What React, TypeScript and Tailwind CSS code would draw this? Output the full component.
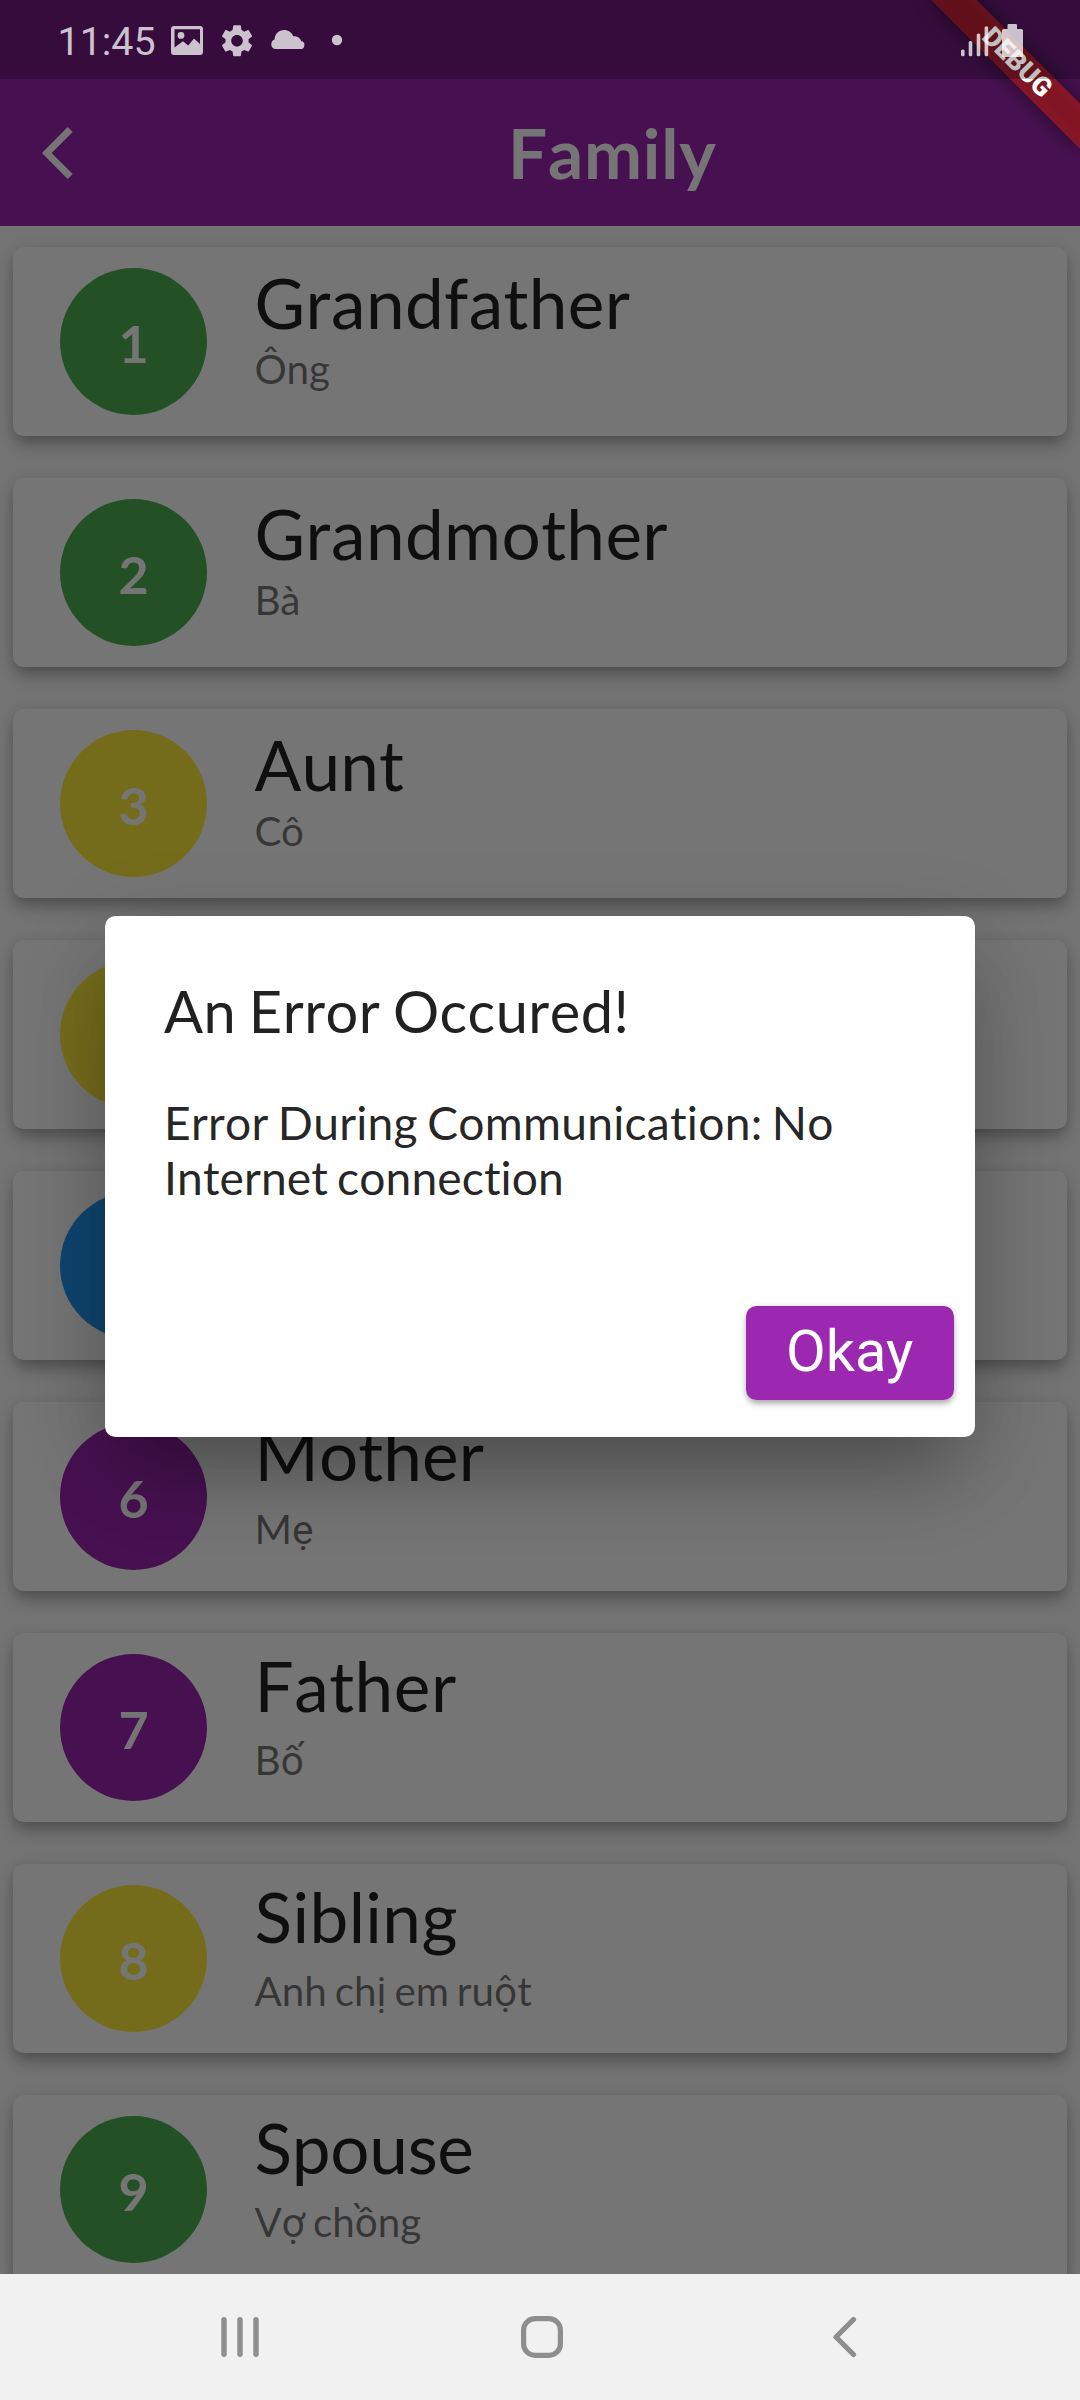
type Entry = { id: number; word: string; meaning: string; color: string; tracking?: string };

const entries: Entry[] = [
  { id: 1, word: 'Grandfather', meaning: 'Ông', color: 'bg-[#4caf50]' },
  { id: 2, word: 'Grandmother', meaning: 'Bà', color: 'bg-[#4caf50]' },
  { id: 3, word: 'Aunt', meaning: 'Cô', color: 'bg-[#ffeb3b]', tracking: 'tracking-[0.1px]' },
  { id: 4, word: '', meaning: '', color: 'bg-[#ffeb3b]' },
  { id: 5, word: '', meaning: '', color: 'bg-[#2196f3]' },
  { id: 6, word: 'Mother', meaning: 'Mẹ', color: 'bg-[#9c27b0]', tracking: 'tracking-[0.1px]' },
  { id: 7, word: 'Father', meaning: 'Bố', color: 'bg-[#9c27b0]', tracking: 'tracking-[0.55px]' },
  { id: 8, word: 'Sibling', meaning: 'Anh chị em ruột', color: 'bg-[#ffeb3b]' },
  { id: 9, word: 'Spouse', meaning: 'Vợ chồng', color: 'bg-[#4caf50]', tracking: 'tracking-[-0.3px]' },
];

// Letters of the Vietnamese extended block are set in the system typeface.
const extended = /([\u1ea0-\u1ef9])/;

function Meaning({ text }: { text: string }) {
  return (
    <>
      {text.split(extended).map((part, i) =>
        extended.test(part) ? (
          <span key={i} className="font-['Roboto',sans-serif]">{part}</span>
        ) : (
          part
        ),
      )}
    </>
  );
}

function Card({ entry }: { entry: Entry }) {
  const tall = extended.test(entry.meaning);
  return (
    <li className="flex h-[189px] shrink-0 gap-[47.5px] rounded-[10.5px] bg-white pl-[47px] shadow-[0_11px_16px_-2px_rgba(0,0,0,0.24),0_2px_14px_rgba(0,0,0,0.14)]">
      <div className={`mt-[21px] flex size-[147px] items-center justify-center rounded-full pt-[3px] text-[52px] leading-none font-bold text-white ${entry.color}`}>
        {entry.id}
      </div>
      <div className={tall ? 'pt-[11px]' : 'pt-[14px]'}>
        <div className={`h-[84px] text-[69.3px] leading-[84px] text-black/87 [font-kerning:none] ${entry.tracking ?? 'tracking-[0.37px]'}`}>
          {entry.word}
        </div>
        <div className={`h-[48px] text-[40.4px] leading-[48px] text-black/54 [word-spacing:-2.4px] ${tall ? 'mt-[8px]' : ''}`}>
          <Meaning text={entry.meaning} />
        </div>
      </div>
    </li>
  );
}

function StatusBar() {
  return (
    <div className="absolute inset-x-0 top-0 z-40 flex h-[79px] items-center bg-black/25 pl-[57.5px] text-white/75">
      <span className="w-[113.5px] pt-[5px] font-['Roboto',sans-serif] text-[39.4px] leading-none">11:45</span>
      <svg className="h-[79px] w-[176px]" viewBox="171 0 176 79" fill="currentColor">
        <path fillRule="evenodd" d="M174 26h26a3 3 0 0 1 3 3v23a3 3 0 0 1-3 3h-26a3 3 0 0 1-3-3V29a3 3 0 0 1 3-3Zm.5 3.2v18.300l8.500-6.300 5.200 4.300 5.800-7 6 5.500V29.200ZM181 32a3.400 3.400 0 1 1 0 6.800a3.400 3.400 0 0 1 0-6.800Z" />
        <g transform="translate(217.7 21.500) scale(1.610)">
          <path d="M19.140 12.940c.040-.300.060-.610.060-.940 0-.320-.020-.640-.070-.940l2.030-1.580c.180-.140.230-.410.120-.610l-1.920-3.320c-.120-.220-.370-.290-.590-.220l-2.390.960c-.500-.380-1.030-.700-1.620-.940l-.360-2.540c-.040-.240-.240-.410-.480-.410h-3.840c-.240 0-.430.170-.470.410l-.360 2.540c-.590.240-1.130.570-1.620.940l-2.390-.960c-.220-.080-.470 0-.590.220L2.740 8.870c-.120.210-.080.470.120.610l2.030 1.580c-.050.300-.090.630-.090.940s.020.640.070.940l-2.030 1.580c-.180.140-.230.410-.120.610l1.920 3.320c.120.220.370.290.590.220l2.390-.960c.500.380 1.030.700 1.620.940l.360 2.540c.050.240.240.410.480.410h3.840c.240 0 .440-.170.470-.410l.360-2.540c.590-.240 1.130-.560 1.620-.940l2.390.960c.220.080.470 0 .590-.220l1.920-3.320c.120-.220.070-.470-.120-.610l-2.010-1.580zM12 15.600c-1.980 0-3.600-1.620-3.600-3.600s1.620-3.600 3.600-3.600 3.600 1.620 3.600 3.600-1.620 3.600-3.600 3.600z" />
        </g>
        <path d="M275 49a5 5 0 0 1-.5-9.500C275 33.500 279 30 284 30c4.500 0 8 2.500 9.300 6.300c4.700-.3 7.200 2.200 7.700 4.700a4 4 0 0 1-1.300 8Z" />
        <circle cx="337" cy="40" r="5.200" />
      </svg>
      <svg className="mr-[54px] ml-auto h-[79px] w-[66px]" viewBox="960 0 66 79" fill="currentColor">
        <rect x="961" y="49.500" width="3.600" height="6.800" rx="1.500" />
        <rect x="968.700" y="41" width="3.600" height="15.300" rx="1.500" />
        <rect x="976.700" y="33.500" width="3.600" height="22.800" rx="1.500" />
        <rect x="984.600" y="26.300" width="3.600" height="30" rx="1.500" />
        <path d="M1008.500 24h7.500a1 1 0 0 1 1 1v4h4.500a1.500 1.500 0 0 1 1.500 1.500v25a1.500 1.500 0 0 1-1.500 1.500h-18a1.500 1.500 0 0 1-1.500-1.500v-25a1.500 1.500 0 0 1 1.500-1.500h4v-4a1 1 0 0 1 1-1Z" />
      </svg>
    </div>
  );
}

function DebugBanner() {
  return (
    <div className="absolute top-[47.4px] left-[911.9px] z-30 h-[31.5px] w-[210px] rotate-45">
      <div className="absolute inset-0 bg-black/50 blur-[10.4px]" />
      <div className="relative flex h-full items-center justify-center bg-[#b71c1c]/63 font-['Roboto',sans-serif] text-[26.8px] leading-none font-black text-white">
        DEBUG
      </div>
    </div>
  );
}

function ErrorDialog() {
  return (
    <div className="absolute inset-x-0 top-[916px] z-20 flex justify-center">
      <div role="alertdialog" className="flex h-[521px] w-[870px] flex-col rounded-[10.5px] bg-white text-black/87 shadow-[0_52px_80px_-22px_rgba(0,0,0,0.26),0_20px_90px_rgba(0,0,0,0.16)]">
        <h2 className="mt-[60px] ml-[59px] text-[57.75px] leading-[70px] tracking-[0.45px] [font-kerning:none] [word-spacing:-2.6px]">An Error Occured!</h2>
        <p className="mt-[49px] ml-[59px] w-[752px] text-[46.2px] leading-[55px] tracking-[0.25px] [font-kerning:none] [word-spacing:-2.8px]">
          Error During Communication: No<br />
          <span className="tracking-[0.1px] [font-variant-ligatures:none]">Internet connection</span>
        </p>
        <button className="mt-auto mr-[21px] mb-[37px] flex h-[94.5px] w-[208.5px] items-center justify-center self-end rounded-[10.5px] bg-[#9c27b0] pb-[2px] font-['Roboto',sans-serif] text-[57.75px] leading-none text-white shadow-[0_5px_6px_-1px_rgba(0,0,0,0.25),0_1px_6px_rgba(0,0,0,0.15)]">
          Okay
        </button>
      </div>
    </div>
  );
}

function NavigationBar() {
  return (
    <nav className="relative z-30 flex h-[126px] items-center bg-[#f1f1f1] text-[#8e8e8e]">
      <svg className="ml-[221px] h-[42px] w-[38px]" viewBox="0 0 38 42" fill="currentColor">
        <rect x="0.300" y="1" width="5.400" height="40" rx="2.700" />
        <rect x="16.300" y="1" width="5.400" height="40" rx="2.700" />
        <rect x="32.300" y="1" width="5.400" height="40" rx="2.700" />
      </svg>
      <svg className="ml-[262px] h-[42px] w-[42px]" viewBox="0 0 42 42" fill="none" stroke="currentColor" strokeWidth="5.200">
        <rect x="2.600" y="2.600" width="36.800" height="36.800" rx="11.500" />
      </svg>
      <svg className="ml-[269px] h-[42px] w-[26px]" viewBox="0 0 26 42" fill="none" stroke="currentColor" strokeWidth="5.200" strokeLinecap="round" strokeLinejoin="round">
        <path d="M21.500 3.500L4 21l17.500 17.500" />
      </svg>
    </nav>
  );
}

export default function App() {
  return (
    <div className="relative flex h-[2400px] w-[1080px] flex-col overflow-hidden bg-[#fafafa] font-['Lato',sans-serif]">
      <header className="flex h-[226px] shrink-0 items-center bg-[#9c27b0] pt-[79px] text-white">
        <svg className="ml-[42px] h-[52px] w-[31px]" viewBox="0 0 31 52" fill="currentColor">
          <path d="M25.700 0l5 4.900L9.600 26l21.100 21.100-5 4.900L0 26z" />
        </svg>
        <h1 className="ml-[435px] text-[69.3px] leading-none font-bold tracking-[0.8px] [font-kerning:none]">Family</h1>
      </header>
      <ul className="flex min-h-0 flex-1 flex-col gap-[42px] px-[13px] pt-[21px]">
        {entries.map((entry) => (
          <Card key={entry.id} entry={entry} />
        ))}
      </ul>
      <div className="absolute inset-x-0 top-0 z-10 h-[2274px] bg-black/54" />
      <ErrorDialog />
      <DebugBanner />
      <StatusBar />
      <NavigationBar />
    </div>
  );
}
